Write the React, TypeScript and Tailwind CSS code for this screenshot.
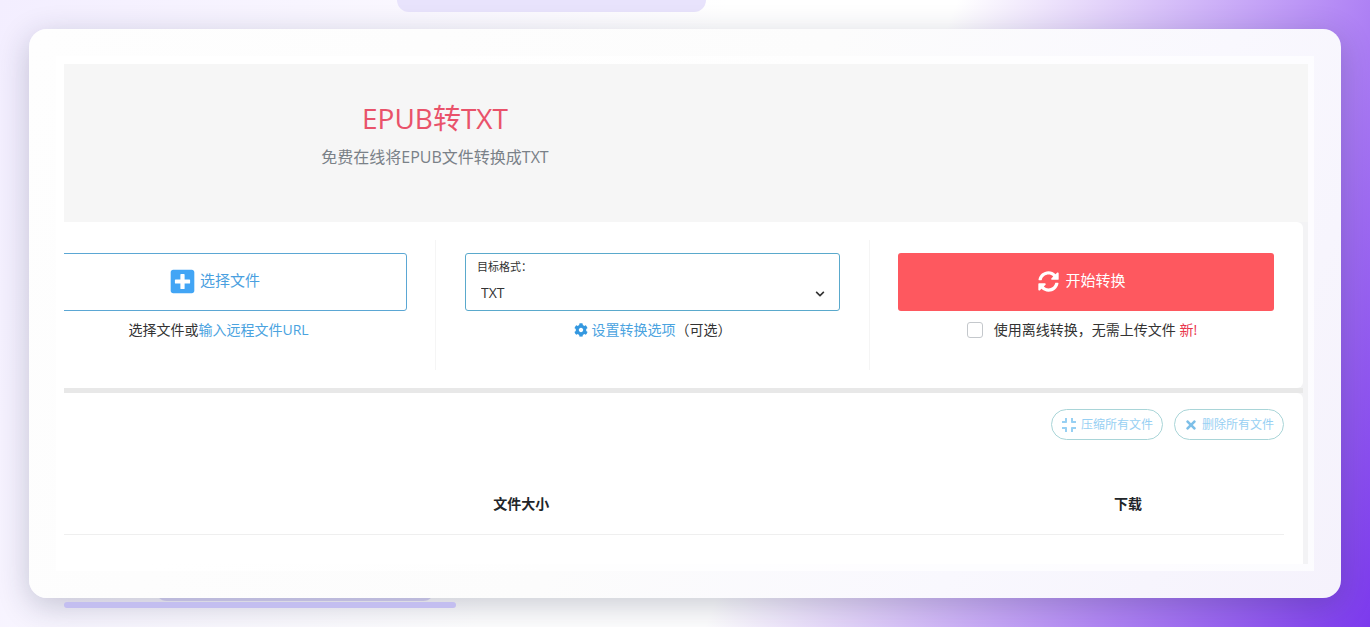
import { FaChevronDown, FaCog, FaCompress, FaPlusSquare, FaSyncAlt, FaTimes } from "react-icons/fa";

function HeroSection() {
  return (
    <header className="h-[158px] bg-[#f6f6f6]">
      <div className="-ml-[63px] mr-[5px]">
        <div className="w-2/3 pt-8 text-center">
          <h1 className="text-[28px] leading-[44px] font-normal text-[#e9526a]">EPUB转TXT</h1>
          <p className="text-base leading-[34px] text-[#7a8188]">免费在线将EPUB文件转换成TXT</p>
        </div>
      </div>
    </header>
  );
}

function ConvertPanel() {
  return (
    <section className="-ml-[63px] mr-[5px] grid grid-cols-3 rounded-r-md bg-white py-[18px] text-sm text-[#333]">
      <div className="h-[130px] pr-7 pl-[29px] pt-[13px]">
        <button
          type="button"
          className="flex h-[58px] w-full items-center justify-center gap-1 rounded-[3px] border border-[#5ba7d4] pr-2 pb-[2px] text-[15px] text-[#4a9fe0]"
        >
          <FaPlusSquare className="size-[27px] text-[#42a5f5]" />
          选择文件
        </button>
        <p className="mt-2 text-center leading-[22px]">
          选择文件或
          <a href="#url" className="text-[#4aa3df]">
            输入远程文件URL
          </a>
        </p>
      </div>

      <div className="h-[130px] border-l border-[#f5f5f5] px-[29px] pt-[13px]">
        <div className="relative flex h-[58px] flex-col rounded-[3px] border border-[#5aa9cc] pt-1">
          <label htmlFor="target" className="pl-[11px] text-[11px] leading-[18px]">
            目标格式：
          </label>
          <select id="target" className="h-[34px] w-full appearance-none bg-transparent pl-[15px] text-sm">
            <option>TXT</option>
          </select>
          <FaChevronDown className="pointer-events-none absolute right-[14px] bottom-[11px] size-[10px]" />
        </div>
        <p className="mt-2 flex items-center justify-center leading-[22px]">
          <a href="#options" className="flex items-center gap-1 text-[#4aa3df]">
            <FaCog className="size-[14px] text-[#3498e0]" />
            设置转换选项
          </a>
          <span>（可选）</span>
        </p>
      </div>

      <div className="h-[130px] border-l border-[#f5f5f5] pr-[29px] pl-7 pt-[13px]">
        <button
          type="button"
          className="flex h-[58px] w-full items-center justify-center gap-[6px] rounded-[3px] bg-[#fe585f] pr-2 pb-[2px] text-[15px] text-white"
        >
          <FaSyncAlt className="size-[21px]" />
          开始转换
        </button>
        <div className="mt-2 flex items-center justify-center pr-2 leading-[22px]">
          <input
            id="offline"
            type="checkbox"
            className="mr-[11px] size-4 appearance-none rounded-[3px] border border-[#c4c8cc] bg-white"
          />
          <label htmlFor="offline">
            使用离线转换，无需上传文件 <span className="text-[#e9364c]">新!</span>
          </label>
        </div>
      </div>
    </section>
  );
}

function FilesPanel() {
  return (
    <section className="-ml-[63px] mr-[5px] rounded-tr-md bg-white px-[19px] pt-4 pb-[29px]">
      <div className="flex justify-end gap-[11px]">
        <button
          type="button"
          className="flex h-[31px] items-center gap-1 rounded-full border border-[#a9d5d8] px-[9px] text-xs text-[#97d0f3]"
        >
          <FaCompress className="size-4" />
          压缩所有文件
        </button>
        <button
          type="button"
          className="flex h-[31px] items-center gap-1 rounded-full border border-[#a9d5d8] px-[9px] text-xs text-[#97d0f3]"
        >
          <FaTimes className="size-[14px] text-[#7dbfe8]" />
          删除所有文件
        </button>
      </div>
      <table className="mt-[34px] w-full table-fixed text-sm text-[#212529]">
        <thead>
          <tr className="h-[60px] border-b border-[#efefef]">
            <td className="w-[30%]" />
            <th className="w-[19%] pl-1 font-bold">文件大小</th>
            <td className="w-[26%]" />
            <th className="w-[25%] pl-1 font-bold">下载</th>
          </tr>
        </thead>
      </table>
    </section>
  );
}

export default function App() {
  return (
    <div className="relative min-h-screen overflow-hidden bg-[linear-gradient(112deg,#f3eeff_0%,#ffffff_45%,#ffffff_59%,#e3d3fa_68%,#b388f5_83%,#7c3aed_100%)] p-[29px] font-['Open_Sans','Noto_Sans_CJK_SC',sans-serif]">
      <div className="absolute top-0 left-[29%] h-3 w-[309px] rounded-b-xl bg-[#e8e3fc]" />
      <div className="absolute bottom-[26px] left-[155px] h-6 w-[280px] rounded-b-xl bg-[#dcd7f8]" />

      <main className="relative rounded-[18px] bg-[linear-gradient(118deg,#fefefe_0%,#fcfcfc_50%,#f9f8fe_75%,#f5f2fc_100%)] p-[27px] shadow-[0_8px_32px_rgba(31,38,70,0.24)]">
        <div className="bg-white/70 pt-2 pr-[6px] pb-[7px] pl-2">
          <div className="overflow-hidden bg-[#f3f3f5]">
            <HeroSection />
            <ConvertPanel />
            <div className="mr-[5px] h-[5px] bg-[#e8e8e8]" />
            <FilesPanel />
          </div>
        </div>
      </main>

      <div className="absolute bottom-[19px] left-16 h-[6px] w-[392px] rounded-full bg-[#c3bef0]" />
    </div>
  );
}
